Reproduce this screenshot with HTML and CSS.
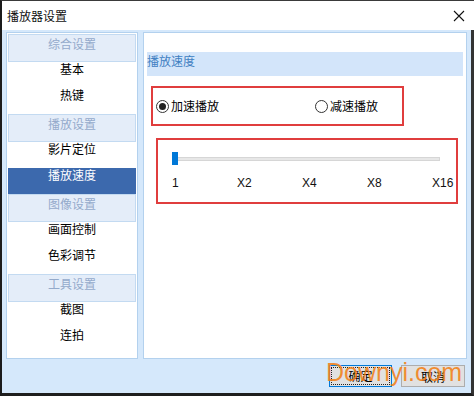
FILE: index.html
```html
<!DOCTYPE html>
<html lang="zh-CN">

<head>
    <meta charset="UTF-8">
    <meta name="viewport" content="width=device-width, initial-scale=1.0">
    <link rel="stylesheet" href="styles.css">
    <title>播放器设置</title>
</head>

<body>

    <div class="window">

        <header class="titlebar">
            <span class="title">播放器设置</span>
            <svg class="close" width="12" height="12" viewBox="0 0 12 12">
                <path d="M1 1 L11 11 M11 1 L1 11" stroke="#111" stroke-width="1.1" fill="none" />
            </svg>
        </header>

        <section class="dialog-body">

            <div class="panels">

                <nav class="side-list">
                    <div class="group-title">综合设置</div>
                    <div class="item">基本</div>
                    <div class="item">热键</div>
                    <div class="group-title">播放设置</div>
                    <div class="item">影片定位</div>
                    <div class="item selected">播放速度</div>
                    <div class="group-title">图像设置</div>
                    <div class="item">画面控制</div>
                    <div class="item">色彩调节</div>
                    <div class="group-title">工具设置</div>
                    <div class="item">截图</div>
                    <div class="item">连拍</div>
                </nav>

                <main class="settings">
                    <h2 class="settings-heading">播放速度</h2>

                    <div class="mark-box radio-row">
                        <label class="radio checked"><span class="dot"></span>加速播放</label>
                        <label class="radio"><span class="dot"></span>减速播放</label>
                    </div>

                    <div class="mark-box slider-box">
                        <div class="track">
                            <span class="thumb"></span>
                        </div>
                        <div class="ticks">
                            <span>1</span>
                            <span>X2</span>
                            <span>X4</span>
                            <span>X8</span>
                            <span>X16</span>
                        </div>
                    </div>
                </main>

            </div>

            <footer class="buttons">
                <button class="btn default"><span>确定</span></button>
                <button class="btn">取消</button>
            </footer>

        </section>

        <div class="watermark">Downyi.com</div>

    </div>

</body>

</html>
```

FILE: styles.css
```css
* {
    box-sizing: border-box;
    font-family: "Noto Sans CJK SC", "Liberation Sans", sans-serif;
}

body {
    margin: 0;
    background-color: #222;
}

.window {
    position: relative;
    width: 474px;
    height: 396px;
    border-left: 2px solid #1b1b1b;
    border-top: 1px solid #3a3a3a;
    display: flex;
    flex-direction: column;
    background-color: #fff;
}

.titlebar {
    height: 29px;
    display: flex;
    align-items: center;
    justify-content: space-between;
    padding: 0 9px 0 5px;
    background-color: #fff;
}

.title {
    font-size: 12px;
    line-height: 14px;
    color: #111;
}

.close {
    display: block;
}

.dialog-body {
    flex: 1;
    display: flex;
    flex-direction: column;
    background-color: #d5e8fb;
    padding: 2px 4px 0 4px;
    border-right: 3px solid #333;
    border-bottom: 3px solid #1e1e1e;
}

.panels {
    display: flex;
    gap: 5px;
    height: 327px;
}

/* left list */

.side-list {
    width: 132px;
    background-color: #fff;
    border: 1px solid #b3d1ee;
    padding: 1px;
    display: flex;
    flex-direction: column;
}

.group-title {
    height: 28px;
    background-color: #e4edf9;
    border: 1px solid #c3daf1;
    color: #94aacb;
    font-size: 12px;
    line-height: 14px;
    padding-top: 2px;
    text-align: center;
}

.item {
    height: 26px;
    font-size: 12px;
    line-height: 14px;
    padding-top: 0;
    color: #000;
    text-align: center;
}

.item.selected {
    background-color: #3c69ad;
    color: #fff;
}

/* right side */

.settings {
    flex: 1;
    background-color: #fff;
    border: 1px solid #b3d1ee;
    padding: 19px 3px 0 3px;
}

.settings-heading {
    margin: 0;
    height: 24px;
    background-color: #d3e5fa;
    color: #3f80c2;
    font-size: 12px;
    font-weight: normal;
    line-height: 14px;
    padding-top: 2px;
}

.mark-box {
    border: 2px solid #e03d3d;
}

.radio-row {
    width: 253px;
    height: 40px;
    margin: 10px 0 0 4px;
    display: flex;
    align-items: center;
    padding-left: 3px;
}

.radio {
    flex: none;
    display: flex;
    align-items: center;
    gap: 2px;
    font-size: 12px;
    line-height: 14px;
    color: #000;
}

.radio:first-child {
    width: 159px;
}

.radio .dot {
    width: 13px;
    height: 13px;
    border-radius: 50%;
    border: 1px solid #333;
    display: flex;
    align-items: center;
    justify-content: center;
}

.radio.checked .dot::after {
    content: "";
    width: 7px;
    height: 7px;
    border-radius: 50%;
    background-color: #222;
}

.slider-box {
    width: 302px;
    height: 66px;
    margin: 12px 0 0 9px;
    padding: 15px 0 0 14px;
}

.track {
    position: relative;
    width: 268px;
    height: 4px;
    margin-top: 2px;
    background-color: #e7e7e7;
    border: 1px solid #d6d6d6;
}

.thumb {
    position: absolute;
    left: -1px;
    top: -6px;
    width: 6px;
    height: 13px;
    background-color: #0078d7;
}

.ticks {
    display: flex;
    margin-top: 15px;
}

.ticks span {
    width: 65px;
    font-family: "Liberation Sans", sans-serif;
    font-size: 12px;
    line-height: 14px;
    color: #111;
}

.ticks span:last-child {
    width: auto;
}

/* buttons */

.buttons {
    display: flex;
    justify-content: flex-end;
    gap: 9px;
    margin-top: 6px;
    padding-right: 2px;
}

.btn {
    width: 64px;
    height: 22px;
    padding: 0;
    background-color: #e1e1e1;
    border: 1px solid #adadad;
    font-size: 12px;
    color: #000;
}

.btn.default {
    width: 63px;
    border-color: #0078d7;
    padding: 1px;
}

.btn.default span {
    display: block;
    height: 100%;
    border: 1px dotted #222;
    line-height: 16px;
}

.watermark {
    position: absolute;
    left: 324px;
    top: 359px;
    font-family: "Liberation Sans", sans-serif;
    font-size: 25px;
    line-height: 25px;
    color: rgba(242, 128, 24, 0.88);
}
```
